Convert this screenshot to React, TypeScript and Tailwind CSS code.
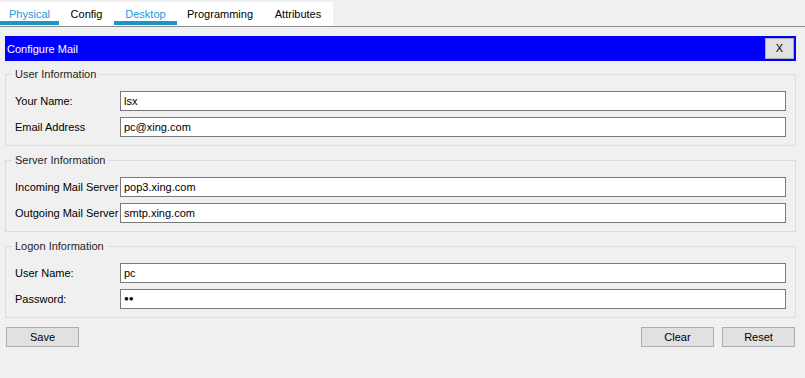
import React from "react";

const tabs = [
  { label: "Physical", w: "w-[59px]", active: true },
  { label: "Config", w: "w-[55px]", active: false },
  { label: "Desktop", w: "w-[63px]", active: true },
  { label: "Programming", w: "w-[86px]", active: false },
  { label: "Attributes", w: "w-[70px]", active: false },
];

type Field = { label: string; value: string; secret?: boolean };

const groups: { title: string; fields: Field[] }[] = [
  {
    title: "User Information",
    fields: [
      { label: "Your Name:", value: "lsx" },
      { label: "Email Address", value: "pc@xing.com" },
    ],
  },
  {
    title: "Server Information",
    fields: [
      { label: "Incoming Mail Server", value: "pop3.xing.com" },
      { label: "Outgoing Mail Server", value: "smtp.xing.com" },
    ],
  },
  {
    title: "Logon Information",
    fields: [
      { label: "User Name:", value: "pc" },
      { label: "Password:", value: "●●", secret: true },
    ],
  },
];

const Group = ({ title, fields }: { title: string; fields: Field[] }) => (
  <fieldset className="border border-[#dcdcdc] pl-[9px] pr-[9px] pb-[8px] pt-[10px] flex flex-col gap-[6px]">
    <legend className="ml-[-3px] px-[3px] leading-[13px] text-[#1e1e1e]">{title}</legend>
    {fields.map((f) => (
      <div key={f.label} className="flex items-center">
        <div className="w-[105px] shrink-0 text-black">{f.label}</div>
        <div className="flex-1 h-[20px] bg-white border border-[#7a7a7a] flex items-center pl-[3px] text-black">
          {f.secret ? <span className="text-[8px] leading-none">{f.value}</span> : f.value}
        </div>
      </div>
    ))}
  </fieldset>
);

const Btn = ({ children }: { children: React.ReactNode }) => (
  <button className="w-[73px] h-[20px] bg-[#e1e1e1] border border-[#adadad] text-black flex items-center justify-center pt-[1px]">
    {children}
  </button>
);

export default function App() {
  return (
    <div className="w-[805px] h-[378px] bg-[#f0f0f0] text-[11px] font-['Liberation_Sans',Arial,sans-serif] overflow-hidden">
      <div className="h-[27px] border-b border-[#8c8c8c] pt-[2px]">
        <div className="flex w-[333px] h-[24px] bg-white">
          {tabs.map((t) => (
            <div
              key={t.label}
              className={`${t.w} h-[24px] flex flex-col items-center ${t.active ? "text-[#1a9bd7]" : "text-black"}`}
            >
              <div className="h-[19px] pt-[6px] leading-[13px]">{t.label}</div>
              {t.active && <div className="w-full h-[4px] bg-[#1b95c8]" />}
            </div>
          ))}
        </div>
      </div>

      <div className="pl-[5px] pr-[9px] pt-[9px]">
        <div className="h-[25px] bg-[#0000ff] flex items-center justify-between pl-[2px] pr-[2px]">
          <span className="text-white pt-[1px]">Configure Mail</span>
          <button className="w-[29px] h-[21px] bg-[#e1e1e1] border border-[#adadad] text-black flex items-center justify-center">
            X
          </button>
        </div>

        <div className="flex flex-col gap-[8px] mt-[7px]">
          {groups.map((g) => (
            <Group key={g.title} title={g.title} fields={g.fields} />
          ))}
        </div>

        <div className="flex items-center mt-[9px] pl-[1px] pr-[1px]">
          <Btn>Save</Btn>
          <div className="flex-1" />
          <div className="flex gap-[8px]">
            <Btn>Clear</Btn>
            <Btn>Reset</Btn>
          </div>
        </div>
      </div>
    </div>
  );
}
